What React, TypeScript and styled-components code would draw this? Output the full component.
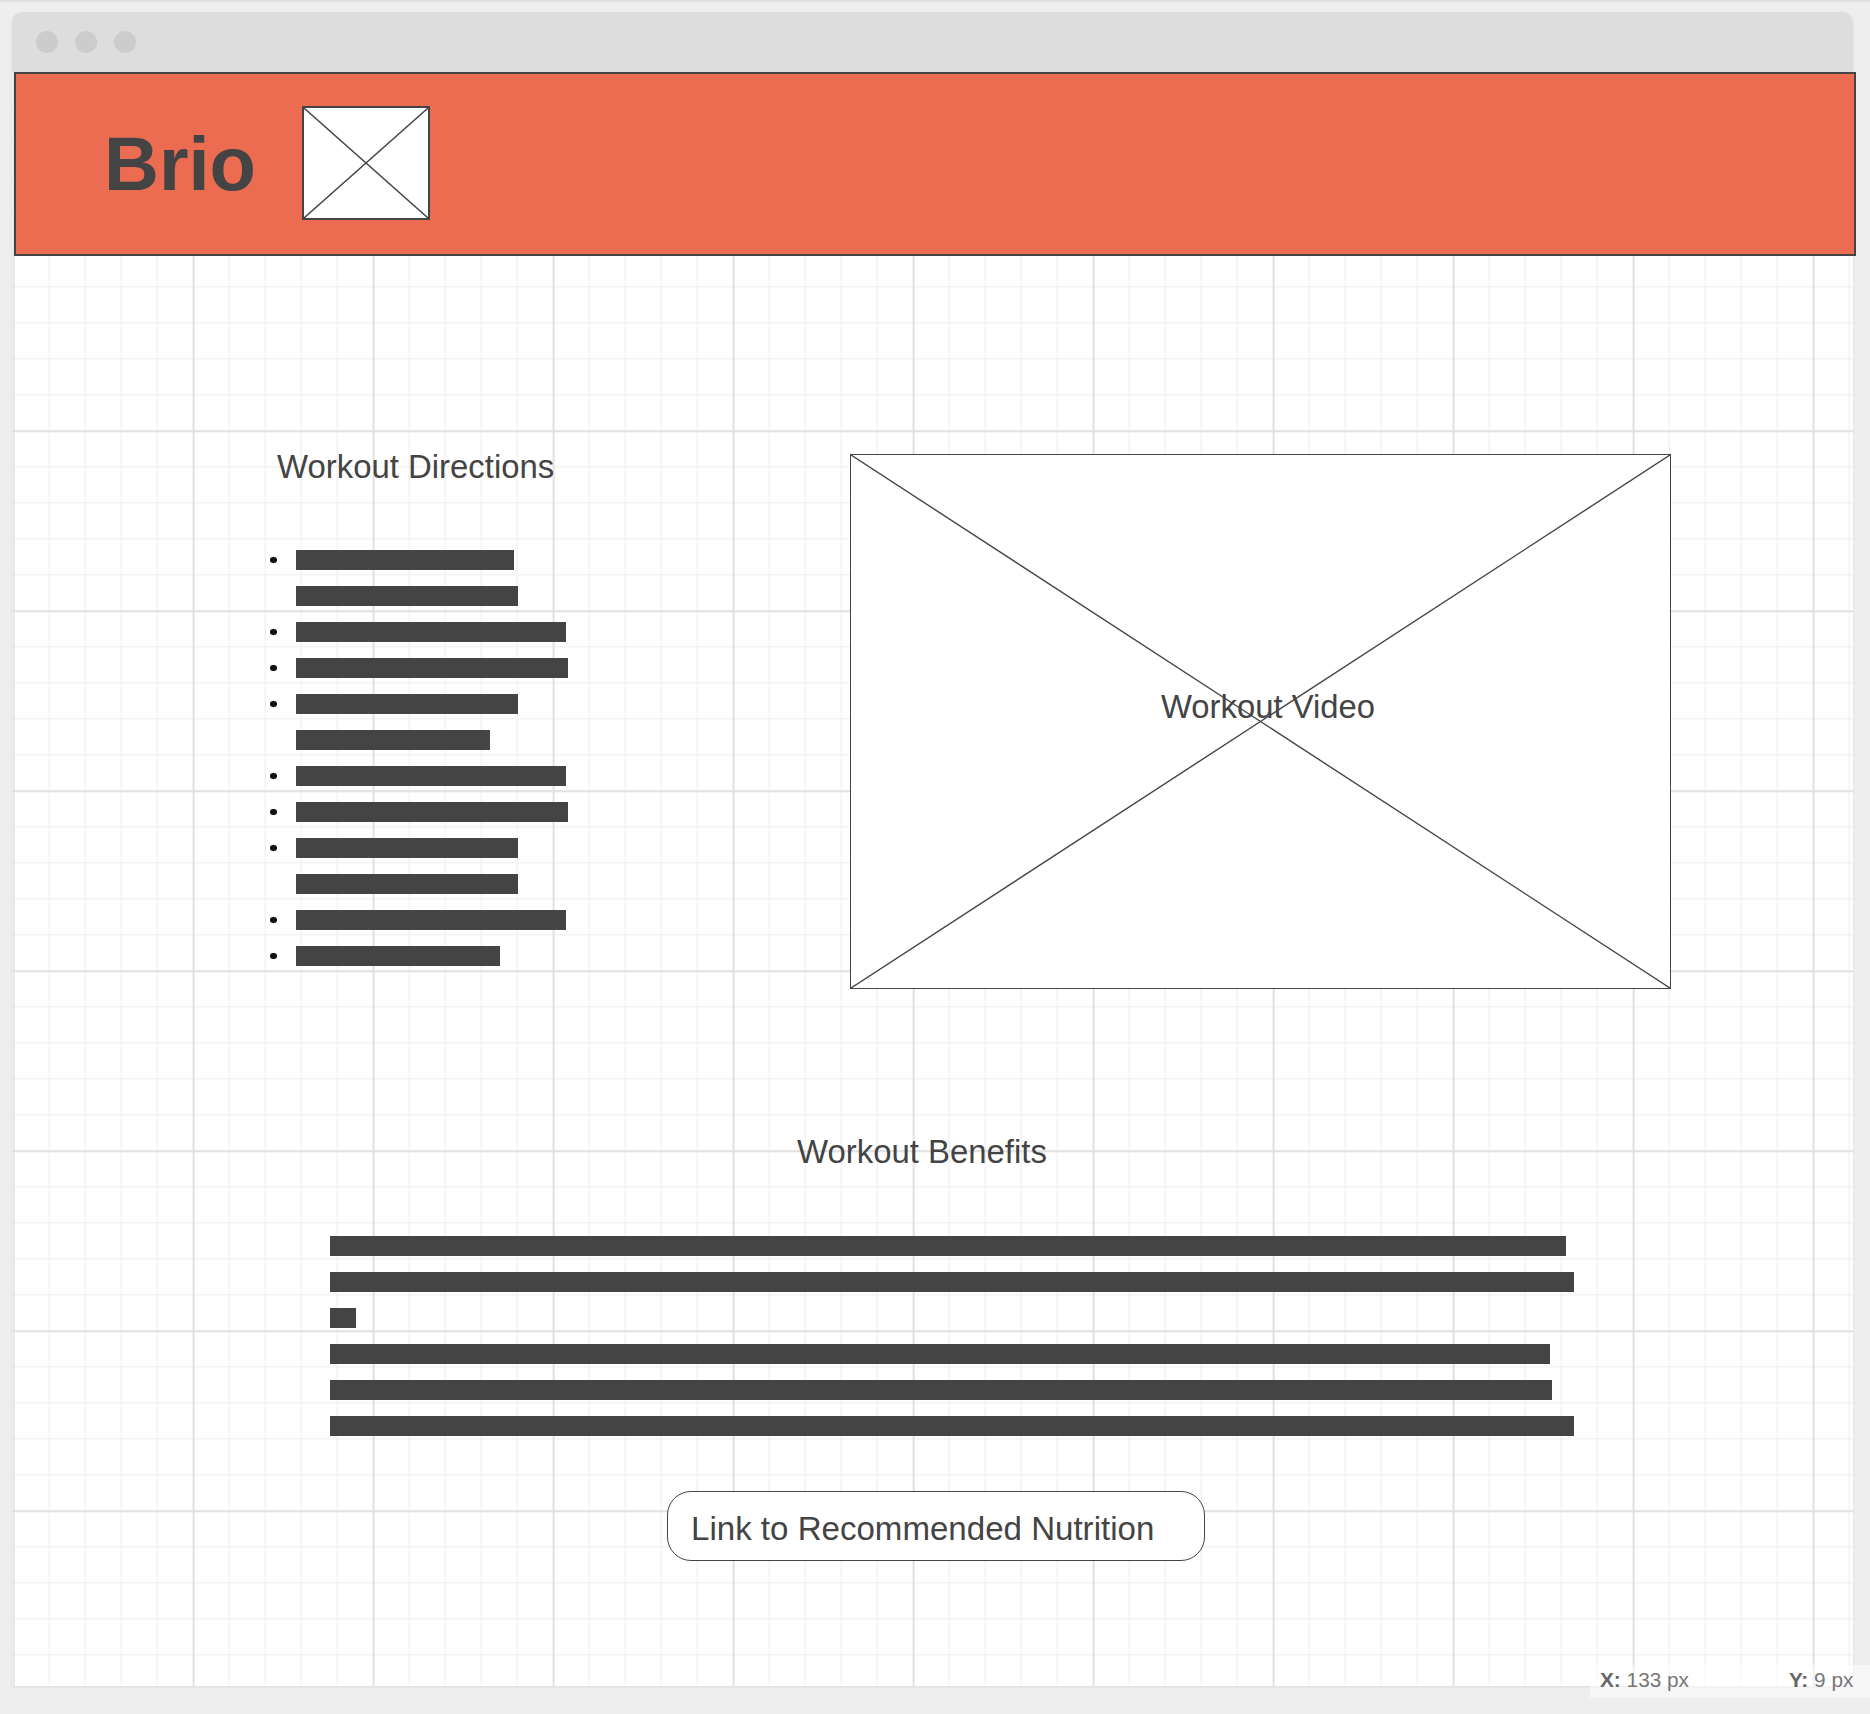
import React from "react";
import styled, { createGlobalStyle } from "styled-components";

const GlobalStyle = createGlobalStyle`
  html, body {
    margin: 0;
    padding: 0;
    background: #eeeeee;
    font-family: "Liberation Sans", Arial, sans-serif;
    color: #444444;
  }
`;

const Page = styled.div`
  position: relative;
  width: 1870px;
  height: 1714px;
  box-sizing: border-box;
  border-top: 2px solid #dedede;
  padding: 10px 0 0 12px;
  overflow: hidden;
`;

const Window = styled.div`
  width: 1841px;
  height: 1674px;
  display: flex;
  flex-direction: column;
  box-shadow: 0 1px 3px rgba(0, 0, 0, 0.08);
  border-radius: 10px 10px 0 0;
`;

const TitleBar = styled.div`
  height: 60px;
  flex: none;
  background: #dddddd;
  border-radius: 10px 10px 0 0;
  display: flex;
  align-items: center;
  gap: 17px;
  padding-left: 24px;
`;

const Dot = styled.span`
  width: 22px;
  height: 22px;
  border-radius: 50%;
  background: #cccccc;
`;

const Canvas = styled.div`
  flex: 1;
  background-color: #ffffff;
  background-image:
    linear-gradient(to right, #e2e2e2 0 1.6px, transparent 1.6px),
    linear-gradient(to bottom, #e2e2e2 0 1.6px, transparent 1.6px),
    linear-gradient(to right, #ededed 0 1.5px, transparent 1.5px),
    linear-gradient(to bottom, #ededed 0 1.5px, transparent 1.5px);
  background-size: 180px 180px, 180px 180px, 36px 36px, 36px 36px;
  background-position: 0.7px -1.7px, 0.7px -1.7px, 0.7px -1.7px, 0.7px -1.7px;
  display: flex;
  flex-direction: column;
`;

const Header = styled.header`
  box-sizing: border-box;
  width: 1842px;
  height: 184px;
  margin-left: 2px;
  background: #ec6c52;
  border: 2px solid #444444;
  display: flex;
  align-items: center;
  padding-left: 88px;
  gap: 46px;
`;

const Brand = styled.h1`
  margin: 0;
  font-family: "Liberation Sans", Arial, sans-serif;
  font-weight: 700;
  font-size: 76px;
  line-height: 76px;
  color: #444444;
`;

const LogoBox = styled.div`
  box-sizing: border-box;
  width: 128px;
  height: 114px;
  margin-top: -2px;
  background: #ffffff;
  border: 2px solid #444444;
  display: flex;
`;

const Placeholder = styled.svg`
  width: 100%;
  height: 100%;
  display: block;
`;

const MainRow = styled.section`
  display: grid;
  grid-template-columns: 580px 821px;
  align-items: start;
  margin-top: 193px;
  padding-left: 258px;
`;

const Directions = styled.div`
  display: flex;
  flex-direction: column;
`;

const Heading = styled.h2<{ $indent: number }>`
  margin: 0;
  padding-left: ${(p) => p.$indent}px;
  font-family: "Liberation Sans", Arial, sans-serif;
  font-weight: 400;
  font-size: 32.9px;
  line-height: 36px;
  color: #444444;
`;

const List = styled.ul<{ $top: number; $indent: number }>`
  list-style: none;
  margin: ${(p) => p.$top}px 0 0 0;
  padding: 0 0 0 ${(p) => p.$indent}px;
  display: flex;
  flex-direction: column;
`;

const Row = styled.li`
  height: 36px;
  display: flex;
  align-items: center;
`;

const Bullet = styled.span<{ $on: boolean }>`
  width: 6.5px;
  height: 6.5px;
  border-radius: 50%;
  background: ${(p) => (p.$on ? "#111111" : "transparent")};
  margin-right: 19.5px;
  flex: none;
`;

const Bar = styled.span<{ $w: number }>`
  display: block;
  width: ${(p) => p.$w}px;
  height: 20px;
  background: #444444;
`;

const VideoBox = styled.div`
  position: relative;
  box-sizing: border-box;
  width: 821px;
  height: 535px;
  margin-top: 5px;
  background: #ffffff;
  border: 1.5px solid #444444;
`;

const VideoLabel = styled.span`
  position: absolute;
  left: 310px;
  top: 234px;
  font-family: "Liberation Sans", Arial, sans-serif;
  font-size: 32.8px;
  line-height: 36px;
  color: #444444;
  white-space: nowrap;
`;

const BenefitsHeading = styled(Heading)`
  margin-top: 145px;
`;

const LinkButton = styled.a`
  box-sizing: border-box;
  width: 538px;
  height: 70px;
  margin: 47px 0 0 655px;
  padding: 6px 0 0 23px;
  display: flex;
  align-items: center;
  background: #ffffff;
  border: 1.6px solid #444444;
  border-radius: 24px;
  font-family: "Liberation Sans", Arial, sans-serif;
  font-size: 33.1px;
  line-height: 36px;
  color: #444444;
  text-decoration: none;
  cursor: pointer;
`;

const CoordBar = styled.div`
  position: absolute;
  left: 1590px;
  top: 1663px;
  width: 280px;
  height: 33px;
  box-sizing: border-box;
  padding: 0 0 4px 10px;
  display: flex;
  align-items: center;
  gap: 100px;
  background: rgba(255, 255, 255, 0.55);
  font-family: "Liberation Sans", Arial, sans-serif;
  font-size: 20.8px;
  color: #777777;
`;

const Coord = styled.span`
  white-space: nowrap;
  b {
    color: #666666;
    font-weight: 700;
  }
`;

const CrossLines = () => (
  <Placeholder viewBox="0 0 100 100" preserveAspectRatio="none">
    <line x1="0" y1="0" x2="100" y2="100" stroke="#444" strokeWidth="1.4" vectorEffect="non-scaling-stroke" />
    <line x1="100" y1="0" x2="0" y2="100" stroke="#444" strokeWidth="1.4" vectorEffect="non-scaling-stroke" />
  </Placeholder>
);

const directions = [
  { bullet: true, w: 218 },
  { bullet: false, w: 222 },
  { bullet: true, w: 270 },
  { bullet: true, w: 272 },
  { bullet: true, w: 222 },
  { bullet: false, w: 194 },
  { bullet: true, w: 270 },
  { bullet: true, w: 272 },
  { bullet: true, w: 222 },
  { bullet: false, w: 222 },
  { bullet: true, w: 270 },
  { bullet: true, w: 204 },
];

const benefits = [1236, 1244, 26, 1220, 1222, 1244];

export default function App() {
  return (
    <>
      <GlobalStyle />
      <Page>
        <Window>
          <TitleBar>
            <Dot />
            <Dot />
            <Dot />
          </TitleBar>
          <Canvas>
            <Header>
              <Brand>Brio</Brand>
              <LogoBox>
                <CrossLines />
              </LogoBox>
            </Header>
            <MainRow>
              <Directions>
                <Heading $indent={7}>Workout Directions</Heading>
                <List $top={57} $indent={0}>
                  {directions.map((d, i) => (
                    <Row key={i}>
                      <Bullet $on={d.bullet} />
                      <Bar $w={d.w} />
                    </Row>
                  ))}
                </List>
              </Directions>
              <VideoBox>
                <CrossLines />
                <VideoLabel>Workout Video</VideoLabel>
              </VideoBox>
            </MainRow>
            <BenefitsHeading $indent={785}>Workout Benefits</BenefitsHeading>
            <List $top={58} $indent={318}>
              {benefits.map((w, i) => (
                <Row key={i}>
                  <Bar $w={w} />
                </Row>
              ))}
            </List>
            <LinkButton>Link to Recommended Nutrition</LinkButton>
          </Canvas>
        </Window>
        <CoordBar>
          <Coord>
            <b>X:</b> 133 px
          </Coord>
          <Coord>
            <b>Y:</b> 9 px
          </Coord>
        </CoordBar>
      </Page>
    </>
  );
}
